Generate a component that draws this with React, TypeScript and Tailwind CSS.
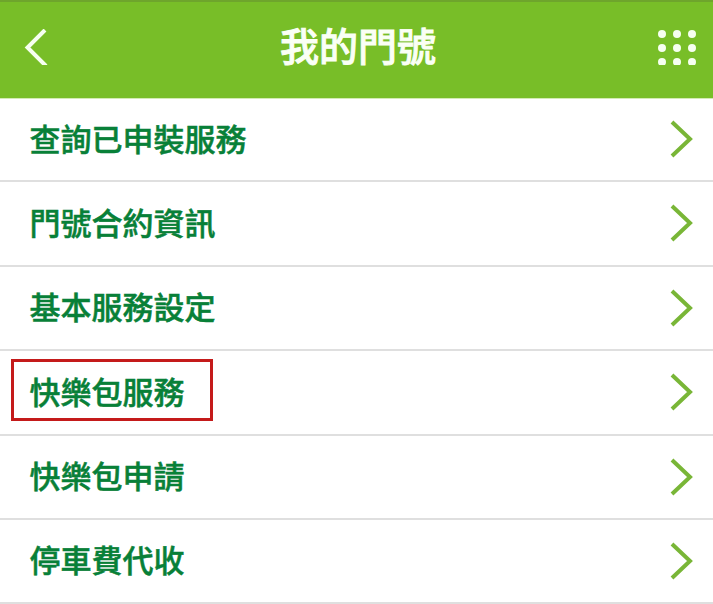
import React from "react";

const menuItems = [
  { label: "查詢已申裝服務", height: "h-[83px]" },
  { label: "門號合約資訊", height: "h-[85px]" },
  { label: "基本服務設定", height: "h-[84px]" },
  { label: "快樂包服務", height: "h-[85px]", marked: true },
  { label: "快樂包申請", height: "h-[84px]" },
  { label: "停車費代收", height: "h-[84px]" },
];

const dots = [0, 1, 2, 3, 4, 5, 6, 7, 8];

const App = () => {
  return (
    <div className="h-[604px] w-[713px] overflow-hidden bg-white font-['Noto_Sans_CJK_TC',sans-serif]">
      <header className="flex h-[99px] items-start justify-between border-t-2 border-b border-t-[#6ea52c] border-b-[#d3ebb4] bg-[#78be28] pr-[17px] pl-[24px]">
        <button type="button" className="mt-[27px] h-[36px] w-[34px] overflow-hidden">
          <svg width="24" height="38" viewBox="0 0 24 38" fill="none">
            <path d="M21 1L3.5 18.5L22 37" stroke="#f6fff0" strokeWidth="4" />
          </svg>
        </button>

        <h1 className="mt-[13px] text-[39px] leading-[58px] font-medium text-[#fafff5] [-webkit-text-stroke:0.9px]">
          我的門號
        </h1>

        {/* the last row of dots is cut off at the bottom */}
        <button
          type="button"
          className="mt-[28px] grid h-[35px] grid-cols-3 content-start gap-x-[7px] gap-y-[6px] overflow-hidden"
        >
          {dots.map((dot) => (
            <span key={dot} className="size-[8px] rounded-full bg-[#f6fff0]" />
          ))}
        </button>
      </header>

      <ul>
        {menuItems.map((item) => (
          <li
            key={item.label}
            className={`relative flex items-center justify-between border-b-2 border-[#dfdfdf] pr-[19px] pl-[29.5px] ${item.height}`}
          >
            <span className="mb-[4px] text-[31px] leading-[46px] font-medium text-[#088038] [-webkit-text-stroke:0.5px]">
              {item.label}
            </span>

            <svg
              className="mb-[1px]"
              width="24"
              height="38"
              viewBox="0 0 24 38"
              fill="none"
            >
              <path d="M2 2L20 19L2 36" stroke="#79b637" strokeWidth="4" />
            </svg>

            {item.marked && (
              <div className="absolute top-[8px] left-[11px] h-[62px] w-[202px] border-3 border-[#c41a1a]" />
            )}
          </li>
        ))}
      </ul>
    </div>
  );
};

export default App;
